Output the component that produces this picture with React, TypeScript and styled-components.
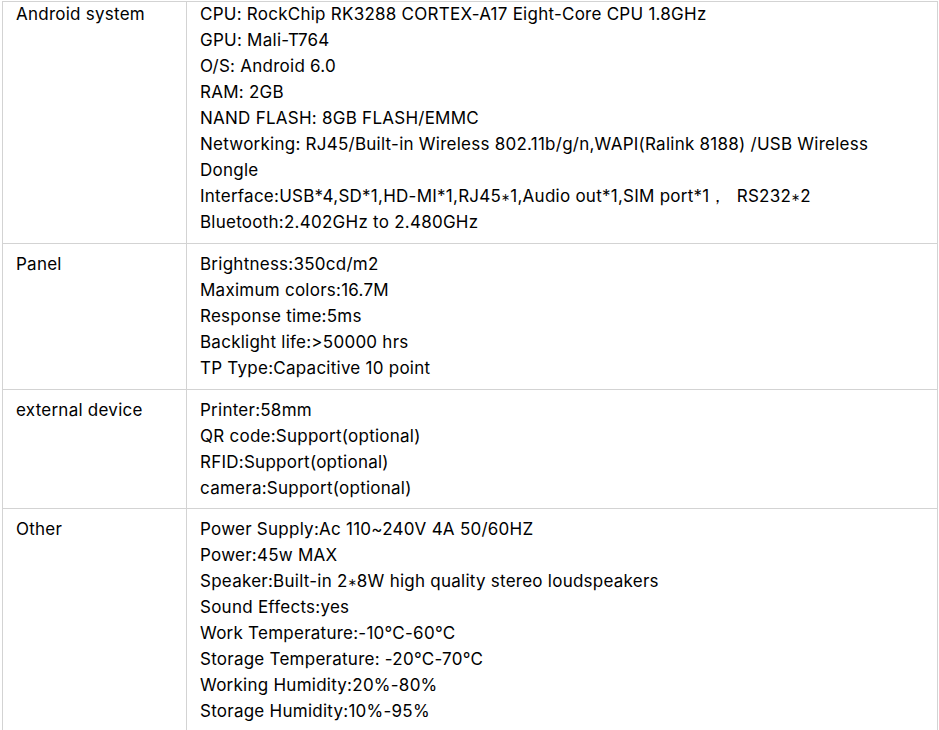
import React from 'react';
import styled, { createGlobalStyle } from 'styled-components';

interface SpecRow {
  label: string;
  lines: string[];
}

const STAR = '\u2217';

const specs: SpecRow[] = [
  {
    label: 'Android system',
    lines: [
      'CPU: RockChip RK3288 CORTEX-A17 Eight-Core CPU 1.8GHz',
      'GPU: Mali-T764',
      'O/S: Android 6.0',
      'RAM: 2GB',
      'NAND FLASH: 8GB FLASH/EMMC',
      'Networking: RJ45/Built-in Wireless 802.11b/g/n,WAPI(Ralink 8188) /USB Wireless Dongle',
      `Interface:USB*4,SD*1,HD-MI*1,RJ45${STAR}1,Audio out*1,SIM port*1\uFF0C  RS232${STAR}2`,
      'Bluetooth:2.402GHz to 2.480GHz',
    ],
  },
  {
    label: 'Panel',
    lines: [
      'Brightness:350cd/m2',
      'Maximum colors:16.7M',
      'Response time:5ms',
      'Backlight life:>50000 hrs',
      'TP Type:Capacitive 10 point',
    ],
  },
  {
    label: 'external device',
    lines: [
      'Printer:58mm',
      'QR code:Support(optional)',
      'RFID:Support(optional)',
      'camera:Support(optional)',
    ],
  },
  {
    label: 'Other',
    lines: [
      'Power Supply:Ac 110~240V 4A 50/60HZ',
      'Power:45w MAX',
      `Speaker:Built-in 2${STAR}8W high quality stereo loudspeakers`,
      'Sound Effects:yes',
      'Work Temperature:-10°C-60°C',
      'Storage Temperature: -20°C-70°C',
      'Working Humidity:20%-80%',
      'Storage Humidity:10%-95%',
    ],
  },
];

const GlobalStyle = createGlobalStyle`
  html, body {
    margin: 0;
    padding: 0;
    background: #fff;
  }
  body {
    font-family: Inter, "Noto Sans", sans-serif;
    font-size: 17px;
    letter-spacing: 0.25px;
    color: #000;
    overflow: hidden;
  }
`;

const Page = styled.div`
  padding: 1px 1px 0 2px;
`;

const SpecTable = styled.table`
  width: 936px;
  border-collapse: collapse;
  table-layout: fixed;
  line-height: 26px;
`;

const LabelCell = styled.td`
  width: 184px;
  box-sizing: border-box;
  border: 1px solid #d3d3d3;
  padding: 7px 10px 7.5px 13px;
  vertical-align: top;
`;

const ValueCell = styled.td`
  border: 1px solid #d3d3d3;
  padding: 7px 30px 7.5px 13px;
  vertical-align: top;
`;

const Line = styled.div`
  white-space: pre-wrap;
`;

// the math asterisk is missing from Inter, so take a smaller DejaVu one
const Star = styled.span`
  font-family: "DejaVu Sans", sans-serif;
  font-size: 11px;
  line-height: 0;
  letter-spacing: 0;
  vertical-align: 1px;
`;

const FirstRow = styled.tr`
  & > td {
    padding-top: 0;
    padding-bottom: 8px;
  }
  & > td > div:first-child {
    margin-top: -1px;
  }
`;

const renderLine = (line: string): React.ReactNode =>
  line.split(STAR).map((part, i) => (
    <React.Fragment key={i}>
      {i > 0 && <Star>{STAR}</Star>}
      {part}
    </React.Fragment>
  ));

const App: React.FC = () => (
  <>
    <GlobalStyle />
    <Page>
      <SpecTable>
        <tbody>
          {specs.map((row, i) => {
            const Row = i === 0 ? FirstRow : 'tr';
            return (
              <Row key={row.label}>
                <LabelCell>
                  <Line>{row.label}</Line>
                </LabelCell>
                <ValueCell>
                  {row.lines.map(line => (
                    <Line key={line}>{renderLine(line)}</Line>
                  ))}
                </ValueCell>
              </Row>
            );
          })}
        </tbody>
      </SpecTable>
    </Page>
  </>
);

export default App;
